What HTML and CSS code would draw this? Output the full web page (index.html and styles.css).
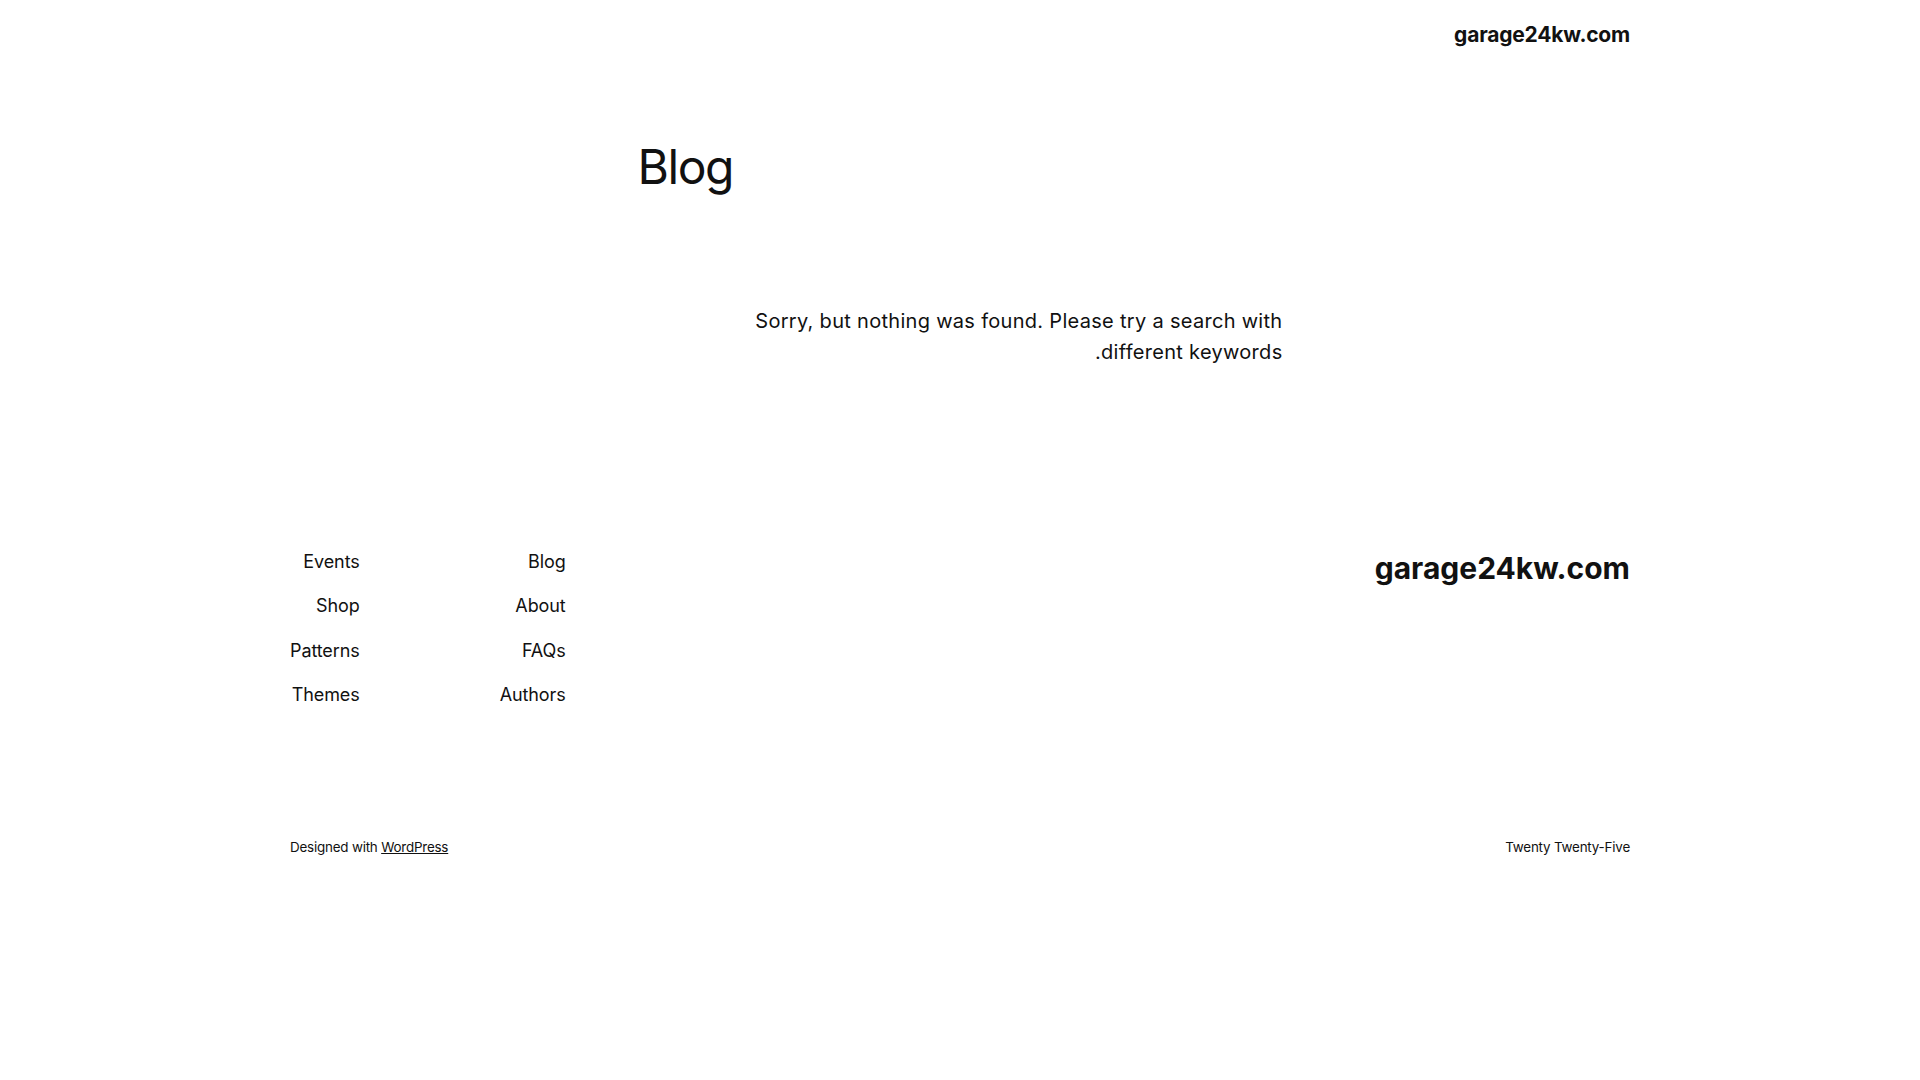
FILE: index.html
```html
<!DOCTYPE html>
<html lang="en" dir="rtl">
<head>
<meta charset="utf-8">
<title>Blog – garage24kw.com</title>
<link rel="stylesheet" href="styles.css">
</head>
<body>
<header class="site-header">
  <div class="wide header-row">
    <a class="site-title" href="#">garage24kw.com</a>
  </div>
</header>
<main class="content">
  <h1 class="page-title">Blog</h1>
  <p class="no-results">Sorry, but nothing was found. Please try a search with different keywords.</p>
</main>
<footer class="site-footer">
  <div class="wide footer-row">
    <a class="footer-title" href="#">garage24kw.com</a>
    <nav class="footer-nav">
      <ul class="nav-col">
        <li><a href="#">Blog</a></li>
        <li><a href="#">About</a></li>
        <li><a href="#">FAQs</a></li>
        <li><a href="#">Authors</a></li>
      </ul>
      <ul class="nav-col">
        <li><a href="#">Events</a></li>
        <li><a href="#">Shop</a></li>
        <li><a href="#">Patterns</a></li>
        <li><a href="#">Themes</a></li>
      </ul>
    </nav>
  </div>
  <div class="wide credits">
    <p class="credit">Twenty Twenty-Five</p>
    <p class="credit">Designed with <a href="#">WordPress</a></p>
  </div>
</footer>
</body>
</html>
```

FILE: styles.css
```css
html, body {
  margin: 0;
  padding: 0;
  background: #ffffff;
}
body {
  font-family: Inter, "Noto Sans", "DejaVu Sans", sans-serif;
  color: #111111;
  -webkit-font-smoothing: antialiased;
}
a {
  color: inherit;
  text-decoration: none;
}
.wide {
  max-width: 1340px;
  margin: 0 auto;
}
.site-header {
  padding: 21px 0 19px;
}
.header-row {
  display: flex;
  justify-content: flex-start;
}
.site-title {
  font-size: 21px;
  line-height: 28px;
  font-weight: 700;
  letter-spacing: -0.2px;
}
.content {
  max-width: 645px;
  margin: 0 auto;
  padding-top: 70px;
}
.page-title {
  margin: 0;
  font-size: 48px;
  line-height: 1.2;
  font-weight: 400;
  letter-spacing: -1.4px;
  text-align: left;
}
.no-results {
  margin: 110px 0 0 0;
  max-width: 560px;
  font-size: 20px;
  line-height: 31px;
  font-weight: 400;
  letter-spacing: 0.3px;
}
.site-footer {
  padding-top: 182px;
  padding-bottom: 40px;
}
.footer-row {
  display: flex;
  justify-content: space-between;
  align-items: flex-start;
}
.footer-title {
  font-size: 30px;
  line-height: 36px;
  font-weight: 700;
  letter-spacing: 0;
}
.footer-nav {
  display: flex;
  gap: 140px;
}
.nav-col {
  list-style: none;
  margin: 0;
  padding: 0;
  display: flex;
  flex-direction: column;
  gap: 20.5px;
}
.nav-col li {
  font-size: 18px;
  line-height: 24px;
  letter-spacing: -0.1px;
}
.credits {
  display: flex;
  justify-content: space-between;
  margin-top: 130px;
}
.credit {
  margin: 0;
  font-size: 13.4px;
  line-height: 21px;
  letter-spacing: -0.2px;
}
.credit a {
  text-decoration: underline;
}
```
